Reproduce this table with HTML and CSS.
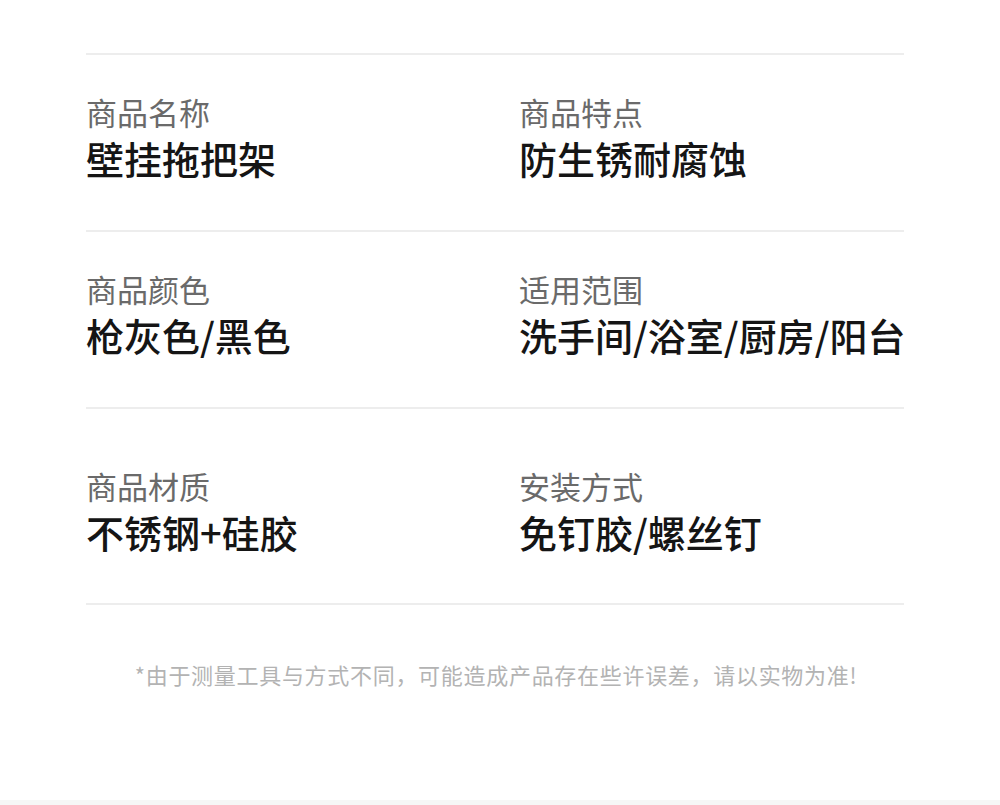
FILE: index.html
```html
<!DOCTYPE html>
<html lang="zh-CN">
<head>
<meta charset="utf-8">
<title>商品参数</title>
<link rel="stylesheet" href="styles.css">
</head>
<body>
<main class="page">
  <section class="specs">
    <div class="row">
      <div class="cell">
        <div class="label">商品名称</div>
        <div class="value">壁挂拖把架</div>
      </div>
      <div class="cell">
        <div class="label">商品特点</div>
        <div class="value">防生锈耐腐蚀</div>
      </div>
    </div>
    <div class="row">
      <div class="cell">
        <div class="label">商品颜色</div>
        <div class="value">枪灰色/黑色</div>
      </div>
      <div class="cell">
        <div class="label">适用范围</div>
        <div class="value">洗手间/浴室/厨房/阳台</div>
      </div>
    </div>
    <div class="row row--tall">
      <div class="cell">
        <div class="label">商品材质</div>
        <div class="value">不锈钢+硅胶</div>
      </div>
      <div class="cell">
        <div class="label">安装方式</div>
        <div class="value">免钉胶/螺丝钉</div>
      </div>
    </div>
  </section>
  <p class="note">*由于测量工具与方式不同，可能造成产品存在些许误差，请以实物为准!</p>
</main>
<div class="strip"></div>
</body>
</html>
```
FILE: styles.css
```css
html, body {
  margin: 0;
  padding: 0;
  background: #ffffff;
}
body {
  font-family: "Noto Sans CJK SC", "Noto Sans", sans-serif;
  width: 1000px;
  height: 805px;
  overflow: hidden;
}
.page {
  padding-top: 53px;
  height: 747px;
}
.specs {
  margin: 0 96px 0 86px;
  border-bottom: 2px solid #ededed;
}
.row {
  display: grid;
  grid-template-columns: 433px 1fr;
  border-top: 2px solid #ededed;
  padding: 37px 0 48px;
}
.row--tall {
  padding: 57px 0 47px;
}
.cell {
  display: flex;
  flex-direction: column;
  gap: 2px;
}
.label {
  font-size: 31px;
  line-height: 40px;
  color: #6a6a6a;
  font-weight: 400;
}
.value {
  font-size: 38px;
  line-height: 48px;
  color: #151515;
  font-weight: 500;
  white-space: nowrap;
}
.note {
  margin: 54px 0 0;
  text-align: center;
  font-size: 22px;
  line-height: 30px;
  letter-spacing: 0.7px;
  color: #b3b3b3;
  padding-right: 8px;
}
.strip {
  height: 5px;
  background: #f6f6f6;
}
```
